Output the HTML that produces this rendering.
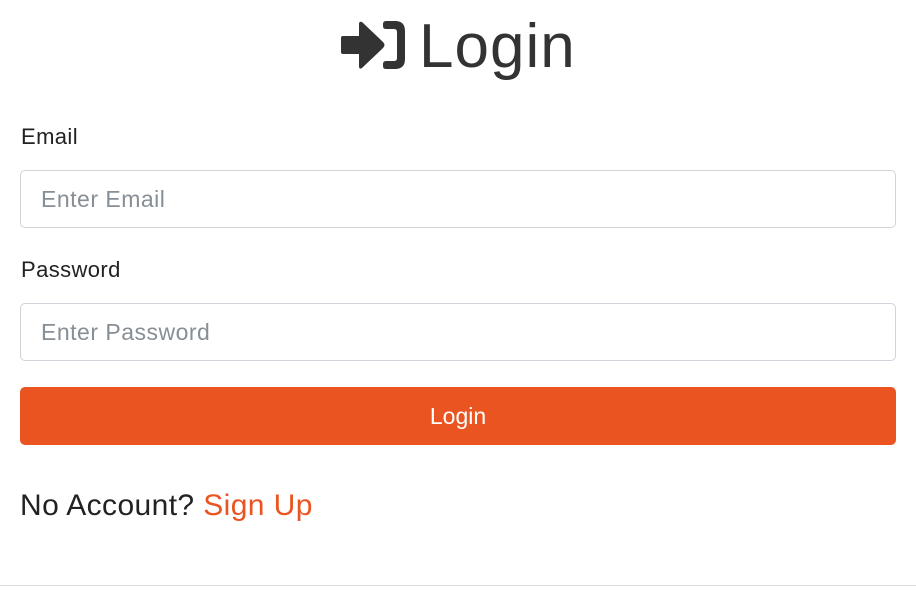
<!DOCTYPE html>
<html><head><style>
body{margin:0;width:916px;height:603px;background:#fff;font-family:"Liberation Sans",sans-serif;color:#333;position:relative;overflow:hidden}
.a{position:absolute}
.inp{position:absolute;left:20px;width:874px;height:56px;border:1px solid #ced4da;border-radius:5px;box-sizing:content-box}
.ph{position:absolute;left:20px;top:0;line-height:56px;font-size:23px;letter-spacing:0.5px;color:#868e96}
.lbl{position:absolute;left:21px;font-size:22px;letter-spacing:0.4px;color:#222}
</style></head><body>
<svg class="a" style="left:341px;top:21px" width="64" height="48" viewBox="0 0 64 48">
<path d="M0 17 Q0 15 2 15 H18 V3 Q18 0 21 1 L42 21 Q45 24 42 27 L21 47 Q18 49 18 45 V33 H2 Q0 33 0 31 Z" fill="#333"/>
<path d="M45 0 H54 Q64 0 64 10 V38 Q64 48 54 48 H45 Q42 48 42 45 V43 Q42 40 45 40 H53 Q56 40 56 37 V11 Q56 8 53 8 H45 Q42 8 42 5 V3 Q42 0 45 0 Z" fill="#333"/>
</svg>
<div class="a" style="left:419px;top:10px;font-size:62px;line-height:74px;letter-spacing:1px;color:#333">Login</div>
<div class="lbl" style="top:124px">Email</div>
<div class="inp" style="top:170px"><div class="ph">Enter Email</div></div>
<div class="lbl" style="top:257px">Password</div>
<div class="inp" style="top:303px"><div class="ph">Enter Password</div></div>
<div class="a" style="left:20px;top:387px;width:876px;height:58px;background:#e95420;border-radius:5px;color:#fff;font-size:23px;line-height:58px;text-align:center">Login</div>
<div class="a" style="left:20px;top:486px;font-size:30px;line-height:40px;letter-spacing:0.4px;color:#222">No Account? <span style="color:#e95420">Sign Up</span></div>
<div class="a" style="left:0;top:585px;width:916px;height:1px;background:#dcdcdc"></div>
</body></html>
